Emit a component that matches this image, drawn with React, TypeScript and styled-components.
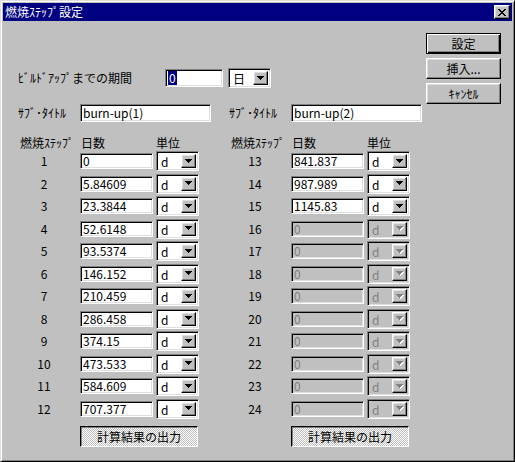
import React from "react";
import styled, { createGlobalStyle, css } from "styled-components";

const GlobalStyle = createGlobalStyle`
  html, body {
    margin: 0;
    padding: 0;
    background: #c0c0c0;
  }
  body {
    font-family: "Noto Sans CJK JP", "Noto Sans", sans-serif;
    font-size: 12px;
    color: #000;
  }
  * {
    box-sizing: border-box;
  }
`;

const raised = css`
  border: 1px solid;
  border-color: #fff #000 #000 #fff;
  box-shadow: inset -1px -1px #808080, inset 1px 1px #dfdfdf;
`;

const sunken = css`
  border: 1px solid;
  border-color: #808080 #fff #fff #808080;
  box-shadow: inset 1px 1px #000, inset -1px -1px #dfdfdf;
`;

const Window = styled.div`
  width: 515px;
  height: 462px;
  display: flex;
  flex-direction: column;
  background: #c0c0c0;
  border: 1px solid;
  border-color: #dfdfdf #000 #000 #dfdfdf;
  box-shadow: inset 1px 1px #fff, inset -1px -1px #808080;
  padding: 2px;
`;

const TitleBar = styled.div`
  height: 18px;
  flex: none;
  display: flex;
  align-items: center;
  padding: 0 2px;
  background: #000080;
`;

const TitleText = styled.span`
  color: #fff;
  font-size: 12px;
  line-height: 18px;
`;

const CloseButton = styled.div`
  ${raised};
  margin-left: auto;
  width: 16px;
  height: 14px;
  display: flex;
  align-items: center;
  justify-content: center;
  background: #c0c0c0;
`;

const Body = styled.div`
  flex: 1;
  display: flex;
`;

const MainPane = styled.div`
  flex: 1;
  display: flex;
  flex-direction: column;
  padding: 47px 0 0 15px;
`;

const ButtonColumn = styled.div`
  width: 75px;
  margin-right: 11px;
  padding-top: 12px;
  display: flex;
  flex-direction: column;
  gap: 4px;
`;

const PushButton = styled.div<{ $default?: boolean }>`
  height: 21px;
  display: flex;
  align-items: center;
  justify-content: center;
  background: #c0c0c0;
  font-size: 12px;
  ${(p) =>
    p.$default
      ? css`
          border: 1px solid #000;
          box-shadow: inset 1px 1px #fff, inset -1px -1px #000,
            inset -2px -2px #808080;
        `
      : raised}
`;

const BuildupRow = styled.div`
  height: 20px;
  display: flex;
  align-items: center;
`;

const Label = styled.span<{ $width?: number }>`
  width: ${(p) => (p.$width ? `${p.$width}px` : "auto")};
  flex: none;
  white-space: nowrap;
  font-size: 12px;
  line-height: 18px;
`;

const TextField = styled.div<{ $width: number; $height?: number; $disabled?: boolean }>`
  ${sunken};
  width: ${(p) => p.$width}px;
  height: ${(p) => p.$height ?? 18}px;
  display: flex;
  align-items: center;
  padding-left: 2px;
  background: ${(p) => (p.$disabled ? "#c0c0c0" : "#fff")};
  color: ${(p) => (p.$disabled ? "#808080" : "#000")};
  font-size: 12px;
  line-height: 12px;
  white-space: nowrap;
  overflow: hidden;
`;

const Selected = styled.span`
  background: #000080;
  color: #fff;
  line-height: 14px;
  padding: 0 1px;
`;

const ComboBox = styled.div<{ $disabled?: boolean }>`
  ${sunken};
  width: 43px;
  height: 20px;
  flex: none;
  display: flex;
  align-items: stretch;
  padding: 2px 2px 2px 2px;
  background: ${(p) => (p.$disabled ? "#c0c0c0" : "#fff")};
  color: ${(p) => (p.$disabled ? "#808080" : "#000")};
`;

const ComboText = styled.span`
  flex: 1;
  padding-left: 2px;
  font-size: 12px;
  line-height: 16px;
`;

const ComboArrow = styled.div`
  ${raised};
  width: 15px;
  display: flex;
  align-items: center;
  justify-content: center;
  background: #c0c0c0;
`;

const Columns = styled.div`
  display: flex;
  gap: 18px;
  margin-top: 16px;
`;

const StepGroup = styled.div`
  width: 193px;
  display: flex;
  flex-direction: column;
`;

const SubtitleRow = styled.div`
  display: flex;
  align-items: center;
  height: 18px;
`;

const HeaderRow = styled.div`
  display: grid;
  grid-template-columns: 62px 76px 43px;
  margin-top: 12px;
  height: 17px;
  align-items: center;
`;

const HeaderCell = styled.span<{ $indent?: number }>`
  padding-left: ${(p) => p.$indent ?? 0}px;
  white-space: nowrap;
  font-size: 12px;
  line-height: 14px;
`;

const StepRow = styled.div`
  display: grid;
  grid-template-columns: 62px 76px 43px;
  height: 22.5px;
  align-items: start;
`;

const StepNo = styled.span`
  width: 52px;
  text-align: center;
  font-size: 12px;
  line-height: 20px;
`;

const FieldSlot = styled.div`
  padding-top: 2px;
`;

const OutputButton = styled.div`
  margin: 5px 0 0 62px;
  width: 118px;
  height: 21px;
  display: flex;
  align-items: center;
  justify-content: center;
  font-size: 12px;
  border: 1px solid;
  border-color: #000 #fff #fff #000;
  box-shadow: inset 1px 1px #808080;
  background-color: #c0c0c0;
  background-image: repeating-conic-gradient(#fff 0 25%, #c0c0c0 0 50%);
  background-size: 2px 2px;
`;

const CloseGlyph = () => (
  <svg width="8" height="7" viewBox="0 0 8 7" shapeRendering="crispEdges">
    <path
      d="M0 0h2v1h1v1h2v-1h1v-1h2v1h-1v1h-1v1h-1v1h1v1h1v1h1v1h-2v-1h-1v-1h-2v1h-1v1h-2v-1h1v-1h1v-1h1v-1h-1v-1h-1v-1h-1z"
      fill="#000"
    />
  </svg>
);

const ArrowGlyph = ({ disabled }: { disabled?: boolean }) => (
  <svg width="8" height="5" viewBox="0 0 8 5" shapeRendering="crispEdges">
    {disabled && (
      <path d="M1 1h7v1h-1v1h-1v1h-1v1h-1v-1h-1v-1h-1v-1h-1z" fill="#fff" />
    )}
    <path
      d="M0 0h7v1h-1v1h-1v1h-1v1h-1v-1h-1v-1h-1v-1h-1z"
      fill={disabled ? "#808080" : "#000"}
    />
  </svg>
);

const Combo = ({ text, disabled }: { text: string; disabled?: boolean }) => (
  <ComboBox $disabled={disabled}>
    <ComboText>{text}</ComboText>
    <ComboArrow>
      <ArrowGlyph disabled={disabled} />
    </ComboArrow>
  </ComboBox>
);

type Step = { no: number; value: string; disabled?: boolean };

const leftSteps: Step[] = [
  "0",
  "5.84609",
  "23.3844",
  "52.6148",
  "93.5374",
  "146.152",
  "210.459",
  "286.458",
  "374.15",
  "473.533",
  "584.609",
  "707.377",
].map((value, i) => ({ no: i + 1, value }));

const rightSteps: Step[] = Array.from({ length: 12 }, (_, i) => {
  const known = ["841.837", "987.989", "1145.83"];
  return i < known.length
    ? { no: i + 13, value: known[i] }
    : { no: i + 13, value: "0", disabled: true };
});

const StepTable = ({ subtitle, steps }: { subtitle: string; steps: Step[] }) => (
  <StepGroup>
    <SubtitleRow>
      <Label $width={62}>ｻﾌﾞ･ﾀｲﾄﾙ</Label>
      <TextField $width={131}>{subtitle}</TextField>
    </SubtitleRow>
    <HeaderRow>
      <HeaderCell $indent={2}>燃焼ｽﾃｯﾌﾟ</HeaderCell>
      <HeaderCell $indent={1}>日数</HeaderCell>
      <HeaderCell>単位</HeaderCell>
    </HeaderRow>
    {steps.map((s) => (
      <StepRow key={s.no}>
        <StepNo>{s.no}</StepNo>
        <FieldSlot>
          <TextField $width={73} $height={16} $disabled={s.disabled}>
            {s.value}
          </TextField>
        </FieldSlot>
        <Combo text="d" disabled={s.disabled} />
      </StepRow>
    ))}
    <OutputButton>計算結果の出力</OutputButton>
  </StepGroup>
);

export default function App() {
  return (
    <>
      <GlobalStyle />
      <Window>
        <TitleBar>
          <TitleText>燃焼ｽﾃｯﾌﾟ設定</TitleText>
          <CloseButton>
            <CloseGlyph />
          </CloseButton>
        </TitleBar>
        <Body>
          <MainPane>
            <BuildupRow>
              <Label $width={147}>ﾋﾞﾙﾄﾞｱｯﾌﾟまでの期間</Label>
              <TextField $width={58} style={{ marginRight: 5 }}>
                <Selected>0</Selected>
              </TextField>
              <Combo text="日" />
            </BuildupRow>
            <Columns>
              <StepTable subtitle="burn-up(1)" steps={leftSteps} />
              <StepTable subtitle="burn-up(2)" steps={rightSteps} />
            </Columns>
          </MainPane>
          <ButtonColumn>
            <PushButton $default>設定</PushButton>
            <PushButton>挿入...</PushButton>
            <PushButton>ｷｬﾝｾﾙ</PushButton>
          </ButtonColumn>
        </Body>
      </Window>
    </>
  );
}
